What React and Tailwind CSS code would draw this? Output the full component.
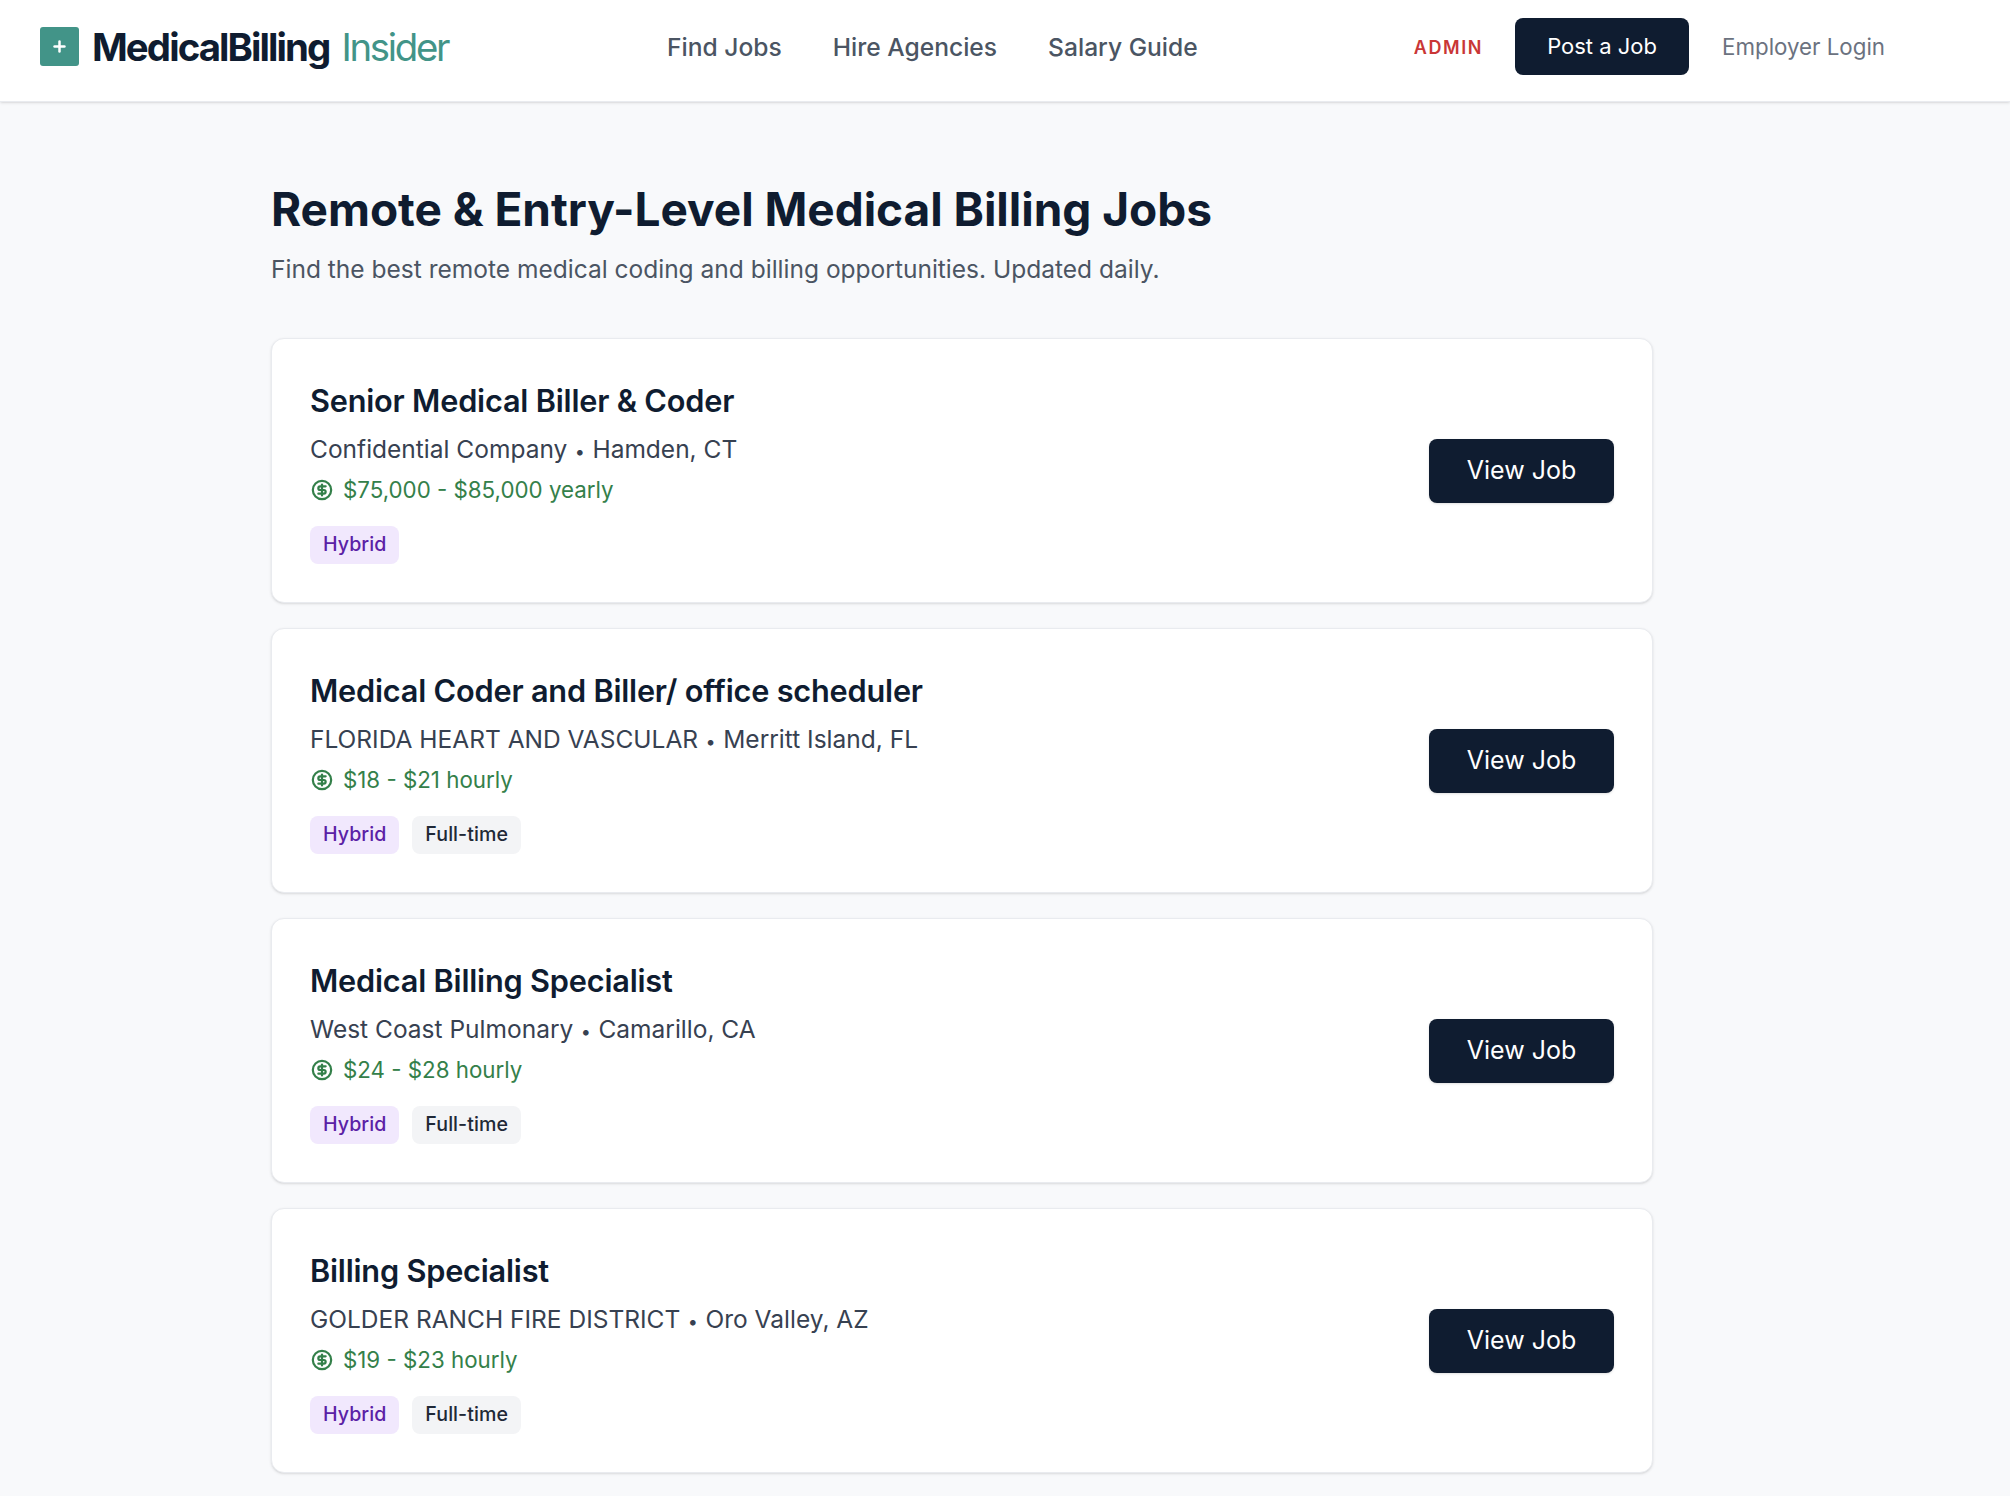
import { CircleDollarSign, Plus } from "lucide-react";

const jobs = [
  { title: "Senior Medical Biller & Coder", company: "Confidential Company", place: "Hamden, CT", pay: "$75,000 - $85,000 yearly", tags: ["Hybrid"] },
  { title: "Medical Coder and Biller/ office scheduler", company: "FLORIDA HEART AND VASCULAR", place: "Merritt Island, FL", pay: "$18 - $21 hourly", tags: ["Hybrid", "Full-time"] },
  { title: "Medical Billing Specialist", company: "West Coast Pulmonary", place: "Camarillo, CA", pay: "$24 - $28 hourly", tags: ["Hybrid", "Full-time"] },
  { title: "Billing Specialist", company: "GOLDER RANCH FIRE DISTRICT", place: "Oro Valley, AZ", pay: "$19 - $23 hourly", tags: ["Hybrid", "Full-time"] },
];

function Tag({ label }) {
  const color = label === "Hybrid" ? "bg-[#f1e8fd] text-[#5b21a6]" : "bg-[#f3f4f6] text-[#1f2937]";
  return (
    <span className={`h-[38px] px-[13px] flex items-center rounded-[8px] text-[19.6px] font-medium tracking-[0.05px] ${color}`}>
      {label}
    </span>
  );
}

function JobCard({ job }) {
  return (
    <div className="h-[265px] flex items-center justify-between pl-[38px] pr-[38px] bg-white border border-[#e9ebef] rounded-[13px] shadow-sm">
      <div className="pt-[4px]">
        <h2 className="text-[30.7px] leading-[40px] font-semibold tracking-[-0.2px] text-[#0f1c30]">{job.title}</h2>
        <p className="mt-[8px] text-[24.5px] leading-[40px] text-[#374151]">
          {job.company}
          <span className="mx-[7.5px] text-[18px]">•</span>
          {job.place}
        </p>
        <div className="-mt-[2px] flex items-center gap-[10px] text-[22.3px] leading-[40px] text-[#34804a]">
          <CircleDollarSign className="ml-[1px]" size={22} strokeWidth={2.4} />
          <span>{job.pay}</span>
        </div>
        <div className="mt-[16px] flex gap-[13px]">
          {job.tags.map((t) => (
            <Tag key={t} label={t} />
          ))}
        </div>
      </div>
      <button className="w-[185px] h-[64px] pt-[1px] rounded-[8px] bg-[#0f1c30] text-white text-[25px] shadow-sm">View Job</button>
    </div>
  );
}

export default function App() {
  return (
    <div className="h-[1496px] overflow-hidden bg-[#f8f9fb] font-['Inter',sans-serif]">
      <header className="h-[102px] flex items-center bg-white border-b border-[#e9ebef] shadow-sm pl-[40px] pb-[7px]">
        <div className="w-[627px] flex items-center">
          <div className="w-[39px] h-[39px] flex items-center justify-center rounded-[3px] bg-[#429488] text-white">
            <Plus size={17} strokeWidth={3.5} />
          </div>
          <span className="ml-[13px] mt-[2px] text-[38.4px] font-bold tracking-[-1.9px] text-[#0f1c30]">MedicalBilling</span>
          <span className="ml-[12px] mt-[2px] text-[38.4px] font-normal tracking-[-2.3px] text-[#429488]">Insider</span>
        </div>
        <nav className="flex gap-[51px] text-[24.6px] font-medium text-[#4b5563]">
          <a>Find Jobs</a>
          <a>Hire Agencies</a>
          <a>Salary Guide</a>
        </nav>
        <div className="ml-[216px] flex items-center">
          <span className="text-[18px] font-semibold tracking-[1.6px] text-[#c93636]">ADMIN</span>
          <button className="ml-[32px] w-[174px] h-[57px] -mt-[2px] rounded-[8px] bg-[#0f1c30] text-white text-[22px]">Post a Job</button>
          <span className="ml-[33px] text-[22.3px] text-[#6b7280]">Employer Login</span>
        </div>
      </header>
      <main className="w-[1382px] ml-[271px] pt-[78px]">
        <h1 className="text-[46px] leading-[58px] font-bold tracking-[-0.03px] text-[#0f1c30]">Remote &amp; Entry-Level Medical Billing Jobs</h1>
        <p className="mt-[13px] text-[24.53px] leading-[36px] text-[#4b5563]">Find the best remote medical coding and billing opportunities. Updated daily.</p>
        <div className="mt-[51px] flex flex-col gap-[25px]">
          {jobs.map((job) => (
            <JobCard key={job.title} job={job} />
          ))}
        </div>
      </main>
    </div>
  );
}
